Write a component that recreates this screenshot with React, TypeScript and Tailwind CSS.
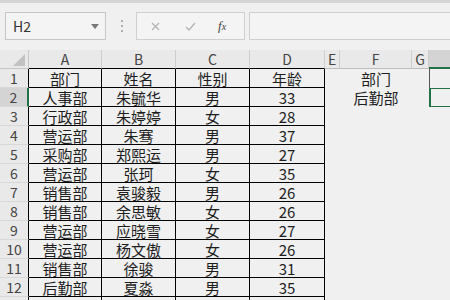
import React from "react";

const rows = [
  ["部门", "姓名", "性别", "年龄"],
  ["人事部", "朱毓华", "男", "33"],
  ["行政部", "朱婷婷", "女", "28"],
  ["营运部", "朱骞", "男", "37"],
  ["采购部", "郑熙运", "男", "27"],
  ["营运部", "张珂", "女", "35"],
  ["销售部", "袁骏毅", "男", "26"],
  ["销售部", "余思敏", "女", "26"],
  ["营运部", "应晓雪", "女", "27"],
  ["营运部", "杨文傲", "女", "26"],
  ["销售部", "徐骏", "男", "31"],
  ["后勤部", "夏淼", "男", "35"],
  ["", "", "", ""],
];

const tableWidths = ["w-[73px]", "w-[74px]", "w-[74px]", "w-[75px]"];
const font = { fontFamily: '"Noto Sans CJK SC", "Liberation Sans", sans-serif' };

function Toolbar() {
  return (
    <div className="h-[50px] bg-[#f0f0f0]">
      <div className="h-[3px] bg-[#d5d5d5]" />
      <div className="flex items-center pt-[9px]">
        <div className="ml-[5px] flex h-[28px] w-[101px] shrink-0 items-center justify-between border border-[#c6c6c6] bg-[#f4f4f4] pl-[7px] pr-[6px]">
          <span className="text-[14px] text-[#333]">H2</span>
          <svg width="8" height="5" viewBox="0 0 8 5">
            <path d="M0 0h8L4 5z" fill="#777" />
          </svg>
        </div>
        <div className="ml-[15px] flex flex-col gap-[3px]">
          <span className="h-[2px] w-[2px] bg-[#b0b0b0]" />
          <span className="h-[2px] w-[2px] bg-[#b0b0b0]" />
          <span className="h-[2px] w-[2px] bg-[#b0b0b0]" />
        </div>
        <div className="ml-[13px] flex h-[28px] w-[109px] shrink-0 items-center border border-[#cfcfcf] bg-[#f4f4f4]">
          <svg className="ml-[14px]" width="9" height="9" viewBox="0 0 9 9">
            <path d="M1 1l7 7M8 1L1 8" stroke="#b3b3b3" strokeWidth="1.2" />
          </svg>
          <svg className="ml-[25px]" width="11" height="9" viewBox="0 0 11 9">
            <path d="M1 5l3 3 6-7" stroke="#b3b3b3" strokeWidth="1.3" fill="none" />
          </svg>
          <span
            className="ml-[22px] text-[13px] italic text-[#444]"
            style={{ fontFamily: '"Liberation Serif", serif' }}
          >
            f<span className="text-[10px]">x</span>
          </span>
        </div>
        <div className="ml-[4px] h-[28px] flex-1 border border-r-0 border-[#cfcfcf] bg-[#f4f4f4]" />
      </div>
    </div>
  );
}

function HeaderRow() {
  const cols = [
    { l: "A", w: "w-[73px]", b: "border-b-black" },
    { l: "B", w: "w-[74px]", b: "border-b-black" },
    { l: "C", w: "w-[74px]", b: "border-b-black" },
    { l: "D", w: "w-[75px]", b: "border-b-black" },
    { l: "E", w: "w-[15px]", b: "border-b-[#bdbdbd]" },
    { l: "F", w: "w-[72px]", b: "border-b-[#bdbdbd]" },
    { l: "G", w: "w-[17px]", b: "border-b-[#bdbdbd]" },
  ];
  return (
    <div className="flex h-[19px]">
      <div className="flex w-[29px] shrink-0 items-end justify-end border-r border-b border-[#c6c6c6] bg-[#e9e9e9] pr-[3px] pb-[2px]">
        <svg width="12" height="12" viewBox="0 0 12 12">
          <path d="M12 0v12H0z" fill="#c2c2c2" />
        </svg>
      </div>
      {cols.map((c) => (
        <div
          key={c.l}
          className={`${c.w} flex shrink-0 items-center justify-center border-r border-b border-r-[#cdcdcd] ${c.b} bg-[#e9e9e9] text-[14px] leading-none text-[#444]`}
        >
          {c.l}
        </div>
      ))}
      <div className="min-w-0 flex-1 border-b-2 border-[#217346] bg-[#d4d4d4]" />
    </div>
  );
}

function SheetRow({ cells, index }: { cells: string[]; index: number }) {
  const selected = index === 2;
  return (
    <div className="flex h-[19px]">
      <div
        className={`flex w-[29px] shrink-0 items-center justify-center border-b border-b-[#d8d8d8] text-[14px] leading-none text-[#444] ${
          selected ? "border-r-2 border-r-[#217346] bg-[#d4d4d4]" : "border-r border-r-black bg-[#e9e9e9]"
        }`}
      >
        {index < 13 ? index : ""}
      </div>
      {cells.map((t, i) => (
        <div
          key={i}
          className={`${tableWidths[i]} flex shrink-0 items-center justify-center border-r border-b border-black text-[15px] leading-none text-[#1e1e1e]`}
        >
          {t}
        </div>
      ))}
      <div className="w-[15px] shrink-0" />
      <div className="flex w-[72px] shrink-0 items-center justify-center text-[15px] leading-none text-[#1e1e1e]">
        {index === 1 ? "部门" : index === 2 ? "后勤部" : ""}
      </div>
      <div className="w-[17px] shrink-0" />
      <div className={`min-w-0 flex-1 overflow-hidden ${index === 1 ? "border-l border-[#555]" : ""}`}>
        {selected && <div className="-mt-[1px] h-[21px] w-[40px] border-2 border-[#217346]" />}
      </div>
    </div>
  );
}

export default function App() {
  return (
    <div className="h-[300px] w-[450px] overflow-hidden bg-[#f0f0f0]" style={font}>
      <Toolbar />
      <HeaderRow />
      {rows.map((r, i) => (
        <SheetRow key={i} cells={r} index={i + 1} />
      ))}
    </div>
  );
}
